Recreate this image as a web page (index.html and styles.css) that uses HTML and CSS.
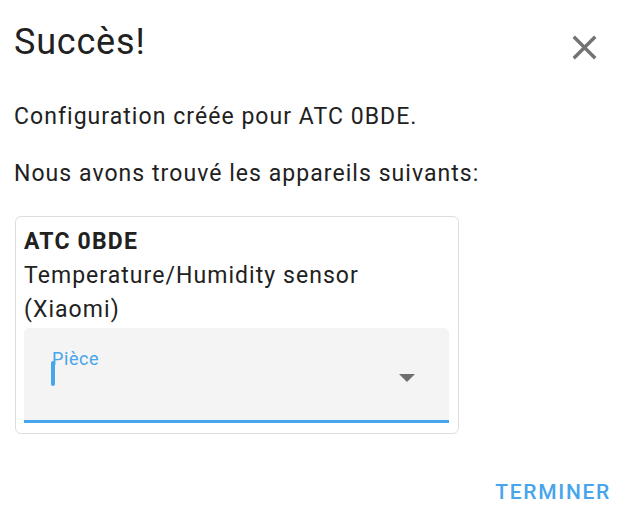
FILE: index.html
```html
<!DOCTYPE html>
<html lang="fr">
<head>
<meta charset="utf-8">
<link rel="stylesheet" href="styles.css">
</head>
<body>
<div class="dialog">
  <div class="header">
    <h2 class="title">Succès!</h2>
    <button class="close" aria-label="Fermer">
      <svg viewBox="0 0 24 24" width="41" height="41"><path d="M19,6.41L17.59,5L12,10.59L6.41,5L5,6.41L10.59,12L5,17.59L6.41,19L12,13.41L17.59,19L19,17.59L13.41,12L19,6.41Z"/></svg>
    </button>
  </div>
  <p class="text first">Configuration créée pour ATC 0BDE.</p>
  <p class="text">Nous avons trouvé les appareils suivants:</p>
  <div class="card">
    <div class="name">ATC 0BDE</div>
    <div class="model">Temperature/Humidity sensor (Xiaomi)</div>
    <div class="field">
      <span class="label">Pièce</span>
      <span class="cursor"></span>
      <span class="arrow"></span>
    </div>
  </div>
  <div class="actions">
    <button class="btn">Terminer</button>
  </div>
</div>
</body>
</html>
```
FILE: styles.css
```css
html, body {
  margin: 0;
  padding: 0;
  background: #fff;
}
body {
  font-family: Roboto, "Noto Sans", sans-serif;
  color: #212121;
  width: 634px;
  height: 520px;
  overflow: hidden;
}
.dialog {
  padding: 0 0 0 14px;
}
.header {
  display: flex;
  justify-content: space-between;
  align-items: flex-start;
  height: 102px;
}
.title {
  margin: 0;
  padding-top: 21px;
  font-size: 36px;
  font-weight: 400;
  line-height: 42px;
  letter-spacing: 0.8px;
}
.close {
  margin: 27px 29px 0 0;
  padding: 0;
  border: 0;
  background: none;
  width: 41px;
  height: 41px;
  display: block;
}
.close svg {
  display: block;
  fill: #737373;
}
.text {
  margin: 0;
  font-size: 23px;
  line-height: 29px;
  letter-spacing: 1.05px;
}
.text.first {
  margin-bottom: 28px;
}
.card {
  margin: 28px 0 0 1px;
  width: 425px;
  border: 1px solid #dedede;
  border-radius: 6px;
  padding: 8px 9px 10px 8px;
}
.name {
  font-weight: 700;
  font-size: 23px;
  line-height: 34px;
  letter-spacing: 1.2px;
}
.model {
  font-size: 23px;
  line-height: 34px;
  letter-spacing: 1.05px;
}
.field {
  position: relative;
  margin-top: 1px;
  height: 92px;
  background: #f4f4f4;
  border-radius: 5px 5px 0 0;
  border-bottom: 3px solid #47a5ec;
}
.label {
  position: absolute;
  left: 28px;
  top: 21px;
  font-size: 18px;
  line-height: 20px;
  letter-spacing: 0.6px;
  color: #47a5ec;
}
.cursor {
  position: absolute;
  left: 27px;
  top: 33px;
  width: 4px;
  height: 25px;
  border-radius: 2px;
  background: #47a5ec;
}
.arrow {
  position: absolute;
  right: 34px;
  top: 46px;
  width: 0;
  height: 0;
  border-left: 8px solid transparent;
  border-right: 8px solid transparent;
  border-top: 8px solid #6f6f6f;
}
.actions {
  display: flex;
  justify-content: flex-end;
  padding: 46px 23px 0 0;
}
.btn {
  border: 0;
  background: none;
  padding: 0;
  font-family: Roboto, "Noto Sans", sans-serif;
  font-weight: 500;
  font-size: 21px;
  letter-spacing: 1.7px;
  text-transform: uppercase;
  color: #47a5ec;
  line-height: 24px;
}
```
